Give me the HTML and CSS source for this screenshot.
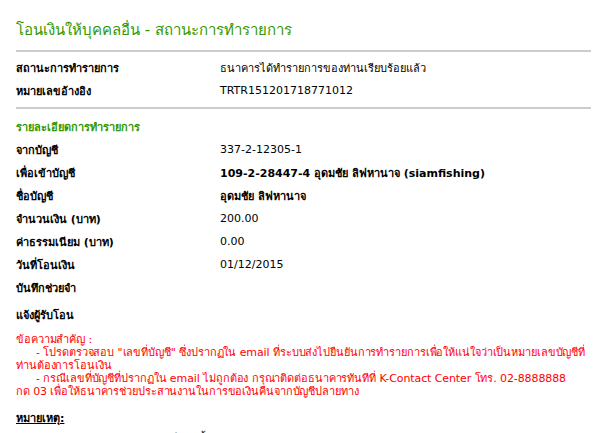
FILE: index.html
```html
<!DOCTYPE html>
<html lang="th">
<head>
  <meta charset="UTF-8">
  <title>โอนเงินให้บุคคลอื่น - สถานะการทำรายการ</title>
  <link rel="stylesheet" href="styles.css">
</head>
<body>
  <div class="page">
    <h1 class="page-title">โอนเงินให้บุคคลอื่น - สถานะการทำรายการ</h1>

    <div class="rows status">
      <div class="label">สถานะการทำรายการ</div>
      <div class="value">ธนาคารได้ทำรายการของท่านเรียบร้อยแล้ว</div>
      <div class="label">หมายเลขอ้างอิง</div>
      <div class="value">TRTR151201718771012</div>
    </div>

    <div class="section-title">รายละเอียดการทำรายการ</div>
    <div class="rows detail">
      <div class="label">จากบัญชี</div>
      <div class="value">337-2-12305-1</div>
      <div class="label">เพื่อเข้าบัญชี</div>
      <div class="value strong">109-2-28447-4 อุดมชัย ลิฟหานาจ (siamfishing)</div>
      <div class="label">ชื่อบัญชี</div>
      <div class="value strong">อุดมชัย ลิฟหานาจ</div>
      <div class="label">จำนวนเงิน (บาท)</div>
      <div class="value">200.00</div>
      <div class="label">ค่าธรรมเนียม (บาท)</div>
      <div class="value">0.00</div>
      <div class="label">วันที่โอนเงิน</div>
      <div class="value">01/12/2015</div>
      <div class="label">บันทึกช่วยจำ</div>
      <div class="value"></div>
    </div>

    <div class="notify">แจ้งผู้รับโอน</div>

    <div class="warning">
      <p>ข้อความสำคัญ :</p>
      <p class="item">- โปรดตรวจสอบ "เลขที่บัญชี" ซึ่งปรากฏใน email ที่ระบบส่งไปยืนยันการทำรายการเพื่อให้แน่ใจว่าเป็นหมายเลขบัญชีที่<br>ท่านต้องการโอนเงิน</p>
      <p class="item">- กรณีเลขที่บัญชีที่ปรากฏใน email ไม่ถูกต้อง กรุณาติดต่อธนาคารทันทีที่ K-Contact Center โทร. 02-8888888<br>กด 03 เพื่อให้ธนาคารช่วยประสานงานในการขอเงินคืนจากบัญชีปลายทาง</p>
    </div>

    <div class="remark">หมายเหตุ:</div>
    <div class="remark-text">ท่านสามารถพิมพ์หน้านี้</div>
  </div>
</body>
</html>
```

FILE: styles.css
```css
/* === GENERAL === */
body {
  margin: 0;
  padding: 0;
  background-color: #fff;
  color: #000;
  font-family: 'DejaVu Sans', Tahoma, sans-serif;
  font-size: 11px;
}
.page {
  padding: 18px 2px 0 16px;
}

/* === HEADINGS === */
.page-title {
  margin: 0;
  padding-bottom: 8px;
  border-bottom: 2px solid #ccc;
  color: #339900;
  font-size: 15px;
  font-weight: normal;
  line-height: 24px;
}
.section-title {
  margin-top: 9px;
  color: #339900;
  font-size: 11px;
  font-weight: bold;
  line-height: 20px;
}

/* === LABEL / VALUE ROWS === */
.rows {
  display: grid;
  grid-template-columns: 204px 1fr;
  grid-auto-rows: 23px;
  align-items: center;
}
.rows.status {
  padding: 4px 0 5px;
  border-bottom: 2px solid #ccc;
}
.label {
  font-weight: bold;
}
.value.strong {
  font-weight: bold;
}

.notify {
  margin-top: 5px;
  font-weight: bold;
  line-height: 23px;
}

/* === WARNING NOTE === */
.warning {
  margin-top: 6px;
  margin-right: -2px;
  color: #ff0000;
  line-height: 13px;
  letter-spacing: -0.1px;
  white-space: nowrap;
}
.warning p {
  margin: 0;
}
.warning .item {
  text-indent: 20px;
}

.remark {
  margin-top: 14px;
  font-weight: bold;
  text-decoration: underline;
  line-height: 14px;
}
.remark-text {
  margin-top: 6px;
  padding-left: 80px;
  line-height: 14px;
}
```
